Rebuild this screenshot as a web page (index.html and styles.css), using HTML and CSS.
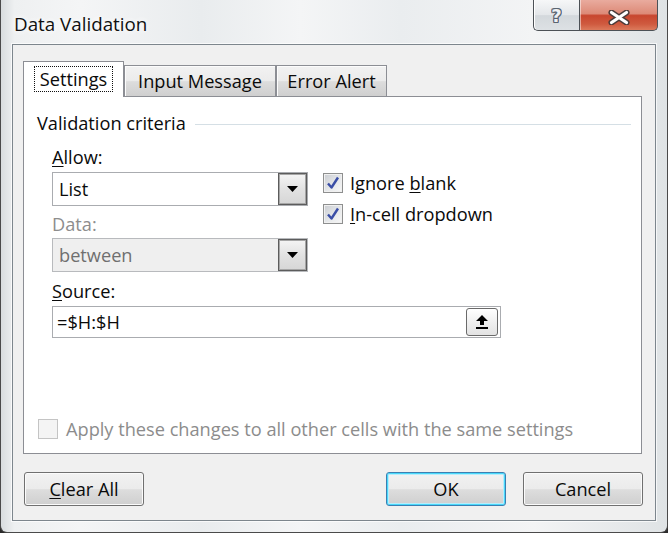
FILE: index.html
```html
<!DOCTYPE html>
<html>
<head>
<meta charset="utf-8">
<link rel="stylesheet" href="styles.css">
</head>
<body>
<div class="window">
  <div class="titlebar">
    <div class="title">Data Validation</div>
    <div class="caption">
      <div class="cap help"><span>?</span></div>
      <div class="cap close">
        <svg width="22" height="15" viewBox="0 0 22 15">
          <path d="M3.5 2.5 L18.5 12.5 M18.5 2.5 L3.5 12.5" stroke="#4b3b3a" stroke-width="6" stroke-linecap="round"/>
          <path d="M3.5 2.5 L18.5 12.5 M18.5 2.5 L3.5 12.5" stroke="#ffffff" stroke-width="3.2" stroke-linecap="round"/>
        </svg>
      </div>
    </div>
  </div>
  <div class="client">
    <div class="tabstrip">
      <div class="tab active"><span class="focus">Settings</span></div>
      <div class="tab t-input">Input Message</div>
      <div class="tab t-error">Error Alert</div>
    </div>
    <div class="panel">
      <div class="group-title"><span>Validation criteria</span><div class="rule"></div></div>
      <div class="criteria">
        <div class="col-left">
          <div class="label"><u>A</u>llow:</div>
          <div class="combo c-allow">
            <span class="combo-text">List</span>
            <div class="drop"><svg width="11" height="6" viewBox="0 0 11 6"><path d="M0 0 H11 L5.5 6 Z" fill="#000"/></svg></div>
          </div>
          <div class="label disabled l-data">Data:</div>
          <div class="combo c-data disabled">
            <span class="combo-text">between</span>
            <div class="drop"><svg width="11" height="6" viewBox="0 0 11 6"><path d="M0 0 H11 L5.5 6 Z" fill="#000"/></svg></div>
          </div>
        </div>
        <div class="col-right">
          <div class="check">
            <span class="box"><svg width="18" height="18" viewBox="0 0 18 18"><path d="M4 9.5 L7.5 13.5 L14 3.5" fill="none" stroke="#3a4ea6" stroke-width="2.4" stroke-linejoin="round"/></svg></span>
            <span>Ignore <u>b</u>lank</span>
          </div>
          <div class="check c2">
            <span class="box"><svg width="18" height="18" viewBox="0 0 18 18"><path d="M4 9.5 L7.5 13.5 L14 3.5" fill="none" stroke="#3a4ea6" stroke-width="2.4" stroke-linejoin="round"/></svg></span>
            <span><u>I</u>n-cell dropdown</span>
          </div>
        </div>
      </div>
      <div class="label l-source"><u>S</u>ource:</div>
      <div class="source">
        <span class="source-text">=$H:$H</span>
        <div class="refbtn">
          <svg width="14" height="16" viewBox="0 0 14 16"><path d="M7 1 L13 7 H9 V11 H5 V7 H1 Z" fill="#000"/><rect x="1" y="13" width="12" height="2" fill="#000"/></svg>
        </div>
      </div>
      <div class="apply">
        <span class="box off"></span>
        <span>Apply these changes to all other cells with the same settings</span>
      </div>
    </div>
    <div class="buttons">
      <div class="btn"><u>C</u>lear All</div>
      <div class="btn-group">
        <div class="btn default">OK</div>
        <div class="btn">Cancel</div>
      </div>
    </div>
  </div>
</div>
</body>
</html>
```

FILE: styles.css
```css
html, body {
  margin: 0;
  padding: 0;
  background: #2a2a2a;
}
body {
  font-family: "Open Sans", "Noto Sans", sans-serif;
  font-size: 18.2px;
  color: #0a0a0a;
}
u { text-decoration-thickness: 1px; text-underline-offset: 2px; }

.window {
  width: 668px;
  height: 533px;
  box-sizing: border-box;
  border: 1px solid #4a4a4a;
  border-top: none;
  border-radius: 0 0 7px 7px;
  background:
    linear-gradient(to right, #d8dcde 0, #eef0f1 2%, #f4f5f6 12%, #e9ecee 30%, #f4f5f6 45%, #eaedef 60%, #f3f4f5 80%, #dfe3e5 100%);
  display: flex;
  flex-direction: column;
  overflow: hidden;
}

.titlebar {
  height: 44px;
  display: flex;
  justify-content: space-between;
  align-items: flex-start;
}
.title {
  padding-left: 13px;
  line-height: 48px;
  font-size: 18.8px;
  color: #101010;
  text-shadow: 0 0 6px #fff, 0 0 10px #fff;
}
.caption {
  display: flex;
  margin-right: 9px;
}
.cap {
  height: 31px;
  box-sizing: border-box;
  border: 1px solid #4c5156;
  border-top: none;
  display: flex;
  align-items: center;
  justify-content: center;
}
.help {
  width: 46px;
  border-right: none;
  border-radius: 0 0 0 5px;
  background: linear-gradient(#f6f7f8, #e3e6e9 50%, #d3d8dc 52%, #dde1e4);
  box-shadow: inset 1px 0 0 #fff;
}
.help span {
  font-family: "DejaVu Sans", sans-serif;
  font-weight: bold;
  font-size: 18px;
  color: #eef0f3;
  margin-top: 1px;
  text-shadow: -1px 0 0 #5a6470, 1px 0 0 #5a6470, 0 -1px 0 #5a6470, 0 1px 0 #5a6470, 1px 1px 0 #5a6470, -1px -1px 0 #5a6470, 1px -1px 0 #5a6470, -1px 1px 0 #5a6470;
}
.close {
  width: 79px;
  border-radius: 0 0 5px 0;
  background: linear-gradient(#e9ab9e 0%, #dd8a78 45%, #c8462f 52%, #cf5a3f 80%, #dc7a5c 100%);
  box-shadow: inset 1px 0 0 rgba(255,255,255,.5);
}
.close svg { margin-top: 4px; }

.client {
  box-sizing: border-box;
  height: 477px;
  margin: 0 11px;
  border: 1px solid #7d868d;
  box-shadow: 0 0 0 1px rgba(255,255,255,.7);
  background: #f0f0f0;
  padding: 16px 0 0 10px;
}

.tabstrip {
  display: flex;
  align-items: flex-end;
  height: 35px;
}
.tab {
  box-sizing: border-box;
  height: 31px;
  border: 1px solid #8c8e94;
  border-bottom: none;
  background: linear-gradient(#f2f2f2, #ebebeb 50%, #dddddd 52%, #cfcfcf);
  box-shadow: inset 1px 1px 0 #fcfcfc;
  display: flex;
  align-items: center;
  justify-content: center;
}
.tab.active {
  width: 101px;
  height: 36px;
  margin-bottom: -1px;
  background: #fff;
  box-shadow: none;
  position: relative;
  z-index: 1;
  padding-bottom: 2px;
}
.focus {
  border: 1px dotted #111;
  padding: 0 5px;
  line-height: 24px;
}
.t-input { width: 152px; }
.t-error { width: 111px; margin-left: 0; }

.panel {
  box-sizing: border-box;
  width: 619px;
  height: 358px;
  border: 1px solid #8c8e94;
  background: #fff;
  display: flex;
  flex-direction: column;
  padding: 15px 10px 13px 13px;
}
.group-title {
  display: flex;
  align-items: center;
  line-height: 22px;
}
.rule {
  flex: 1;
  height: 1px;
  margin-left: 9px;
  margin-top: 2px;
  background: #d5dfe5;
}

.criteria {
  display: flex;
  margin-left: 15px;
  margin-top: 12px;
}
.col-left { width: 256px; }
.label {
  line-height: 22px;
  height: 22px;
}
.label.disabled { color: #8d8d8d; }
.combo {
  box-sizing: border-box;
  height: 34px;
  margin-top: 4px;
  border: 1px solid #aaacb0;
  background: #fff;
  display: flex;
  align-items: stretch;
}
.combo-text {
  flex: 1;
  padding-left: 6px;
  line-height: 32px;
}
.drop {
  box-sizing: border-box;
  width: 29px;
  border: 1px solid #5c5c5c;
  box-shadow: inset 0 0 0 1px #a6a6a6;
  background: linear-gradient(#f5f5f5, #e2e2e2 50%, #d6d6d6);
  display: flex;
  align-items: center;
  justify-content: center;
}
.l-data { margin-top: 7px; }
.combo.disabled {
  margin-top: 3px;
  background: #efefef;
  border-color: #b8babd;
  color: #6f6f6f;
}

.col-right {
  margin-left: 15px;
  padding-top: 26px;
}
.check {
  display: flex;
  align-items: center;
  line-height: 22px;
  gap: 7px;
}
.check.c2 { margin-top: 9px; }
.box {
  box-sizing: border-box;
  width: 20px;
  height: 20px;
  border: 1px solid #8e8f8f;
  background: linear-gradient(135deg, #c9ccd1, #e6e8ea 55%, #f7f7f7);
  box-shadow: inset 0 0 0 1px #f0f0f0;
  display: flex;
  align-items: center;
  justify-content: center;
}
.box.off {
  border-color: #c4c4c4;
  background: #f4f4f4;
  box-shadow: none;
}

.l-source {
  margin-top: 8px;
  margin-left: 15px;
}
.source {
  box-sizing: border-box;
  width: 449px;
  height: 32px;
  margin-top: 4px;
  margin-left: 15px;
  border: 1px solid #aaacb0;
  display: flex;
  align-items: center;
}
.source-text {
  flex: 1;
  padding-left: 4px;
  line-height: 30px;
}
.refbtn {
  box-sizing: border-box;
  width: 32px;
  height: 28px;
  margin-right: 2px;
  border: 1px solid #6a6a6a;
  border-radius: 3px;
  background: linear-gradient(#ffffff, #f0f0f0 50%, #e3e3e3);
  display: flex;
  align-items: center;
  justify-content: center;
}

.apply {
  margin-top: auto;
  margin-left: 1px;
  display: flex;
  align-items: center;
  gap: 8px;
  line-height: 22px;
  color: #8c8c8c;
}

.buttons {
  display: flex;
  justify-content: space-between;
  width: 619px;
  margin-top: 18px;
  margin-left: 1px;
}
.btn-group {
  display: flex;
  gap: 17px;
}
.btn {
  box-sizing: border-box;
  width: 120px;
  height: 34px;
  border: 1px solid #707070;
  border-radius: 3px;
  background: linear-gradient(#f2f2f2, #ebebeb 50%, #dddddd 52%, #cfcfcf);
  box-shadow: inset 0 0 0 1px #fbfbfb;
  display: flex;
  align-items: center;
  justify-content: center;
}
.btn.default {
  border-color: #3c7fb1;
  box-shadow: inset 0 0 0 1px #48d8fb, inset 0 0 0 2px #b8ecfb;
}
```
